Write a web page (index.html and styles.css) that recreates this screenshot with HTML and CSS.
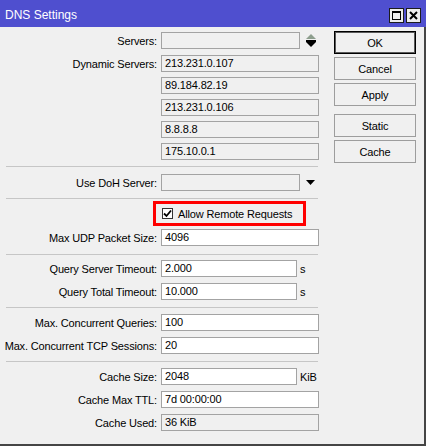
FILE: index.html
```html
<!DOCTYPE html>
<html>
<head>
<meta charset="utf-8">
<title>DNS Settings</title>
<link rel="stylesheet" href="styles.css">
</head>
<body>
<div class="window">
  <div class="titlebar">
    <span class="title">DNS Settings</span>
    <div class="tbtns">
      <span class="tbtn"><svg width="13" height="13" viewBox="0 0 13 13"><rect x="2.5" y="2.5" width="8" height="8" fill="none" stroke="#000" stroke-width="1"/><rect x="2" y="2" width="9" height="2" fill="#000"/></svg></span>
      <span class="tbtn"><svg width="13" height="13" viewBox="0 0 13 13"><path d="M3 3 L10 10 M10 3 L3 10" stroke="#000" stroke-width="2"/></svg></span>
    </div>
  </div>
  <div class="body">
    <div class="form">
      <div class="row servers-row">
        <span class="label">Servers:</span>
        <span class="field ro w139"></span>
        <svg class="updown" width="10" height="14" viewBox="0 0 10 14"><path d="M5 0 L10 5 L0 5 Z" fill="#8d9e8d"/><rect x="0" y="6" width="10" height="2" fill="#000"/><path d="M0 8 L10 8 L5 13 Z" fill="#000"/></svg>
      </div>
      <div class="dyn">
        <div class="row"><span class="label">Dynamic Servers:</span><span class="field ro w158">213.231.0.107</span></div>
        <div class="row"><span class="label"></span><span class="field ro w158">89.184.82.19</span></div>
        <div class="row"><span class="label"></span><span class="field ro w158">213.231.0.106</span></div>
        <div class="row"><span class="label"></span><span class="field ro w158">8.8.8.8</span></div>
        <div class="row"><span class="label"></span><span class="field ro w158">175.10.0.1</span></div>
      </div>
      <div class="sep s1"></div>
      <div class="row">
        <span class="label">Use DoH Server:</span>
        <span class="field ro w139"></span>
        <svg class="down" width="9" height="5" viewBox="0 0 9 5"><path d="M0 0 L9 0 L4.5 5 Z" fill="#000"/></svg>
      </div>
      <div class="sep s2"></div>
      <div class="checkrow">
        <div class="redbox">
          <span class="checkbox"><svg width="9" height="9" viewBox="0 0 9 9"><path d="M1 4.5 L3.5 7 L8 1.5" fill="none" stroke="#000" stroke-width="1.8"/></svg></span>
          <span class="checklabel">Allow Remote Requests</span>
        </div>
      </div>
      <div class="row"><span class="label">Max UDP Packet Size:</span><span class="field w158">4096</span></div>
      <div class="sep s3"></div>
      <div class="group">
        <div class="row"><span class="label">Query Server Timeout:</span><span class="field w136">2.000</span><span class="unit">s</span></div>
        <div class="row"><span class="label">Query Total Timeout:</span><span class="field w136">10.000</span><span class="unit">s</span></div>
      </div>
      <div class="sep s4"></div>
      <div class="group">
        <div class="row"><span class="label">Max. Concurrent Queries:</span><span class="field w158">100</span></div>
        <div class="row"><span class="label">Max. Concurrent TCP Sessions:</span><span class="field w158">20</span></div>
      </div>
      <div class="sep s4"></div>
      <div class="group">
        <div class="row"><span class="label">Cache Size:</span><span class="field w136">2048</span><span class="unit">KiB</span></div>
        <div class="row"><span class="label">Cache Max TTL:</span><span class="field w158">7d 00:00:00</span></div>
        <div class="row"><span class="label">Cache Used:</span><span class="field ro w158">36 KiB</span></div>
      </div>
    </div>
    <div class="buttons">
      <span class="btn default">OK</span>
      <span class="btn">Cancel</span>
      <span class="btn">Apply</span>
      <span class="btn gap">Static</span>
      <span class="btn">Cache</span>
    </div>
  </div>
</div>
</body>
</html>
```

FILE: styles.css
```css
html, body {
  margin: 0;
  padding: 0;
  background: #ffffff;
}
body {
  font-family: "Liberation Sans", Arial, sans-serif;
  font-size: 11px;
  letter-spacing: -0.15px;
  color: #000;
}
.window {
  width: 426px;
  height: 446px;
  display: flex;
  flex-direction: column;
}
.titlebar {
  height: 27px;
  background: #4f4fcf;
  display: flex;
  align-items: center;
  justify-content: space-between;
  padding: 3px 5px 0 5px;
  box-sizing: border-box;
  flex: none;
}
.title {
  color: #ffffff;
  font-size: 12px;
  letter-spacing: 0;
}
.tbtns {
  display: flex;
  gap: 2px;
}
.tbtn {
  width: 15px;
  height: 15px;
  box-sizing: border-box;
  border: 1px solid #1c1c1c;
  background: #eeeeee;
  display: flex;
  align-items: center;
  justify-content: center;
}
.body {
  flex: 1;
  background: #f0f0f0;
  border-right: 2px solid #454545;
  border-bottom: 2px solid #454545;
  display: flex;
  align-items: flex-start;
}
.form {
  width: 318px;
  padding-top: 5px;
  display: flex;
  flex-direction: column;
}
.row {
  display: flex;
  align-items: center;
  height: 17px;
}
.servers-row {
  margin-bottom: 6px;
}
.dyn, .group {
  display: flex;
  flex-direction: column;
  gap: 6px;
}
.dyn {
  gap: 5px;
}
.label {
  width: 157px;
  flex: none;
  text-align: right;
  margin-right: 4px;
  white-space: nowrap;
}
.field {
  height: 17px;
  box-sizing: border-box;
  border: 1px solid #a3a3a3;
  background: #ffffff;
  padding-left: 3px;
  line-height: 15px;
  white-space: nowrap;
  flex: none;
}
.field.ro {
  background: #f0f0f0;
}
.w139 { width: 139px; }
.w158 { width: 158px; }
.w136 { width: 136px; }
.unit {
  margin-left: 3px;
}
.updown {
  margin-left: 6px;
  margin-top: 1px;
}
.down {
  margin-left: 6px;
  margin-top: 0px;
}
.sep {
  height: 1px;
  background: #c6c6c6;
  margin-left: 6px;
}
.s1 { margin-top: 6px; margin-bottom: 7px; }
.s2 { margin-top: 7px; margin-bottom: 2px; }
.s3 { margin-top: 8px; margin-bottom: 5px; }
.s4 { margin-top: 7px; margin-bottom: 6px; }
.checkrow {
  display: flex;
  padding-left: 153px;
  margin-bottom: 3px;
}
.redbox {
  width: 153px;
  height: 25px;
  box-sizing: border-box;
  border: 3px solid #ff0000;
  display: flex;
  align-items: center;
  padding-left: 6px;
}
.checkbox {
  width: 11px;
  height: 11px;
  box-sizing: border-box;
  border: 1px solid #333;
  background: #fff;
  display: flex;
  align-items: center;
  justify-content: center;
  margin-right: 5px;
}
.checklabel {
  white-space: nowrap;
}
.buttons {
  margin-left: 16px;
  padding-top: 4px;
  display: flex;
  flex-direction: column;
  gap: 3px;
}
.btn {
  width: 82px;
  height: 23px;
  box-sizing: border-box;
  border: 1px solid #9d9d9d;
  background: #f0f0f0;
  display: flex;
  align-items: center;
  justify-content: center;
}
.btn.default {
  border: 1px solid #000;
  box-shadow: inset 0 0 0 1px #5a5a5a;
}
.btn.gap {
  margin-top: 5px;
}
```
